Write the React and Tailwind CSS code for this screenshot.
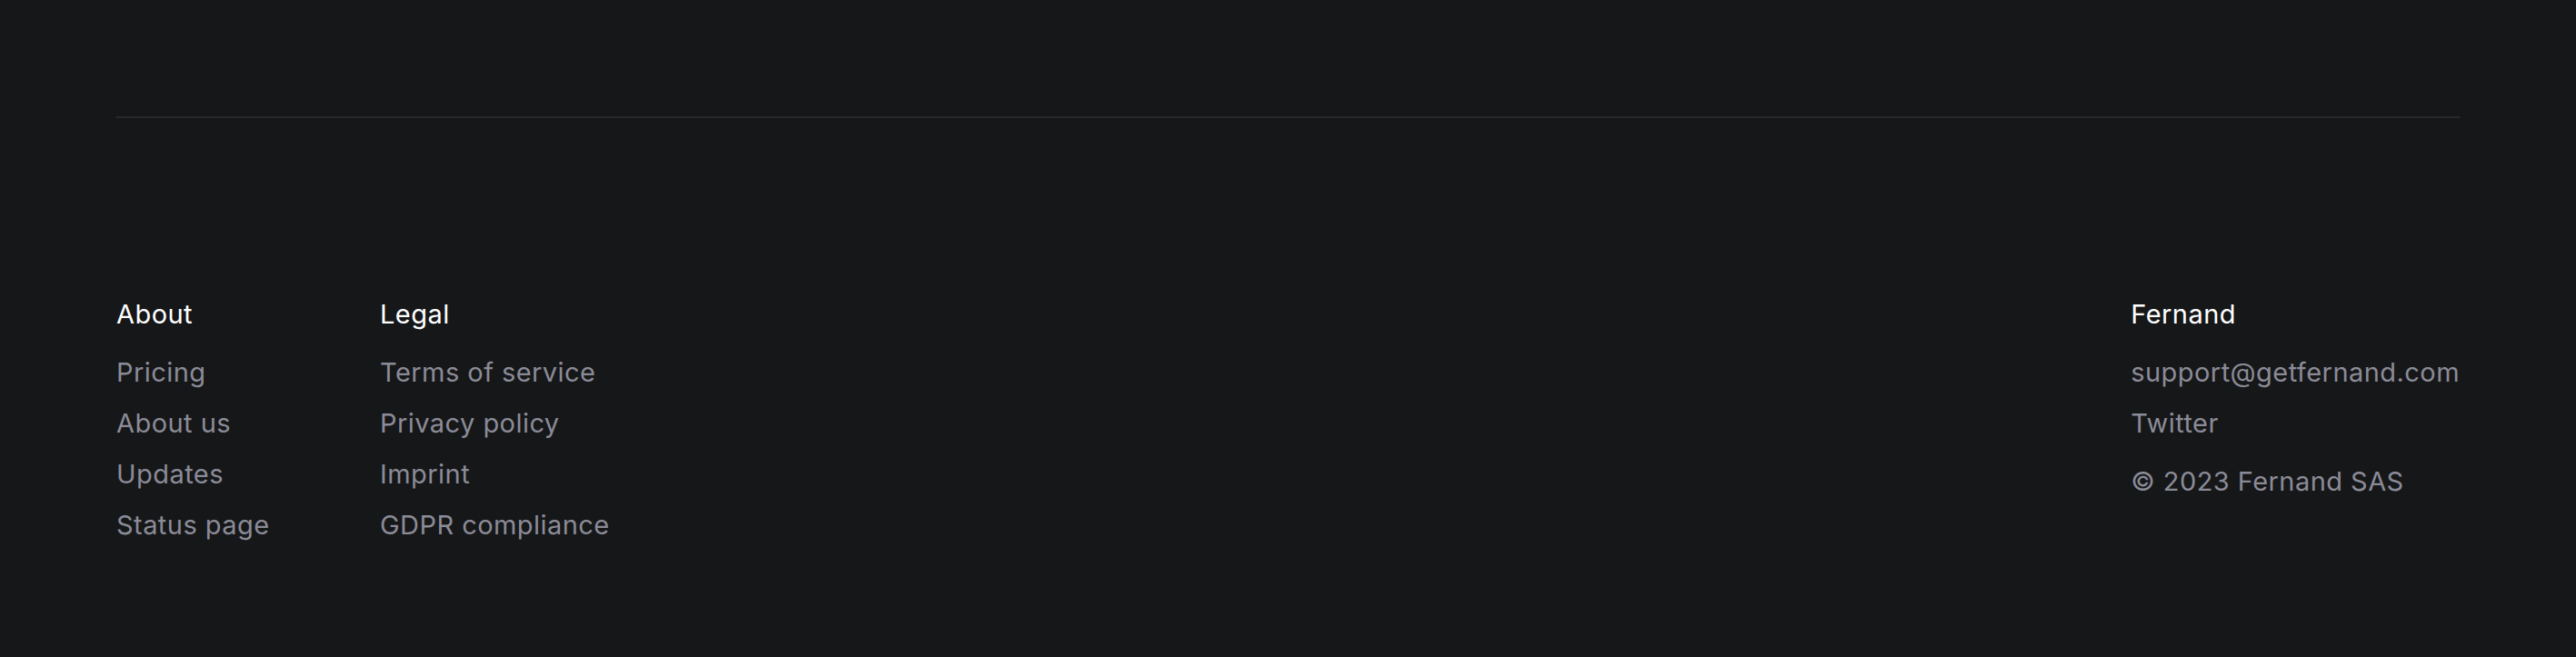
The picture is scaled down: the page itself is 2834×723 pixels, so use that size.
import React from "react";

const Col = ({ title, items, extra }) => (
  <div className="flex flex-col">
    <div className="text-[29px] leading-[56px] tracking-[0.45px] text-white whitespace-nowrap">{title}</div>
    <ul className="mt-2 flex flex-col">
      {items.map((t) => (
        <li
          key={t}
          className="text-[29px] leading-[56px] tracking-[0.45px] text-[#8b8b97] whitespace-nowrap"
        >
          {t}
        </li>
      ))}
    </ul>
    {extra}
  </div>
);

export default function App() {
  return (
    <div
      className="w-full h-[723px] bg-[#161719] px-[128px] pt-[128px] antialiased"
      style={{ fontFamily: "Inter, 'Noto Sans', sans-serif" }}
    >
      <div className="h-[2px] bg-[#27282b]" />
      <div className="mt-[188px] flex justify-between">
        <div className="flex">
          <div className="w-[290px]">
            <Col title="About" items={["Pricing", "About us", "Updates", "Status page"]} />
          </div>
          <Col
            title="Legal"
            items={["Terms of service", "Privacy policy", "Imprint", "GDPR compliance"]}
          />
        </div>
        <Col
          title="Fernand"
          items={["support@getfernand.com", "Twitter"]}
          extra={
            <div className="mt-2 text-[29px] leading-[56px] tracking-[0.45px] text-[#8b8b97] whitespace-nowrap">
              © 2023 Fernand SAS
            </div>
          }
        />
      </div>
    </div>
  );
}
